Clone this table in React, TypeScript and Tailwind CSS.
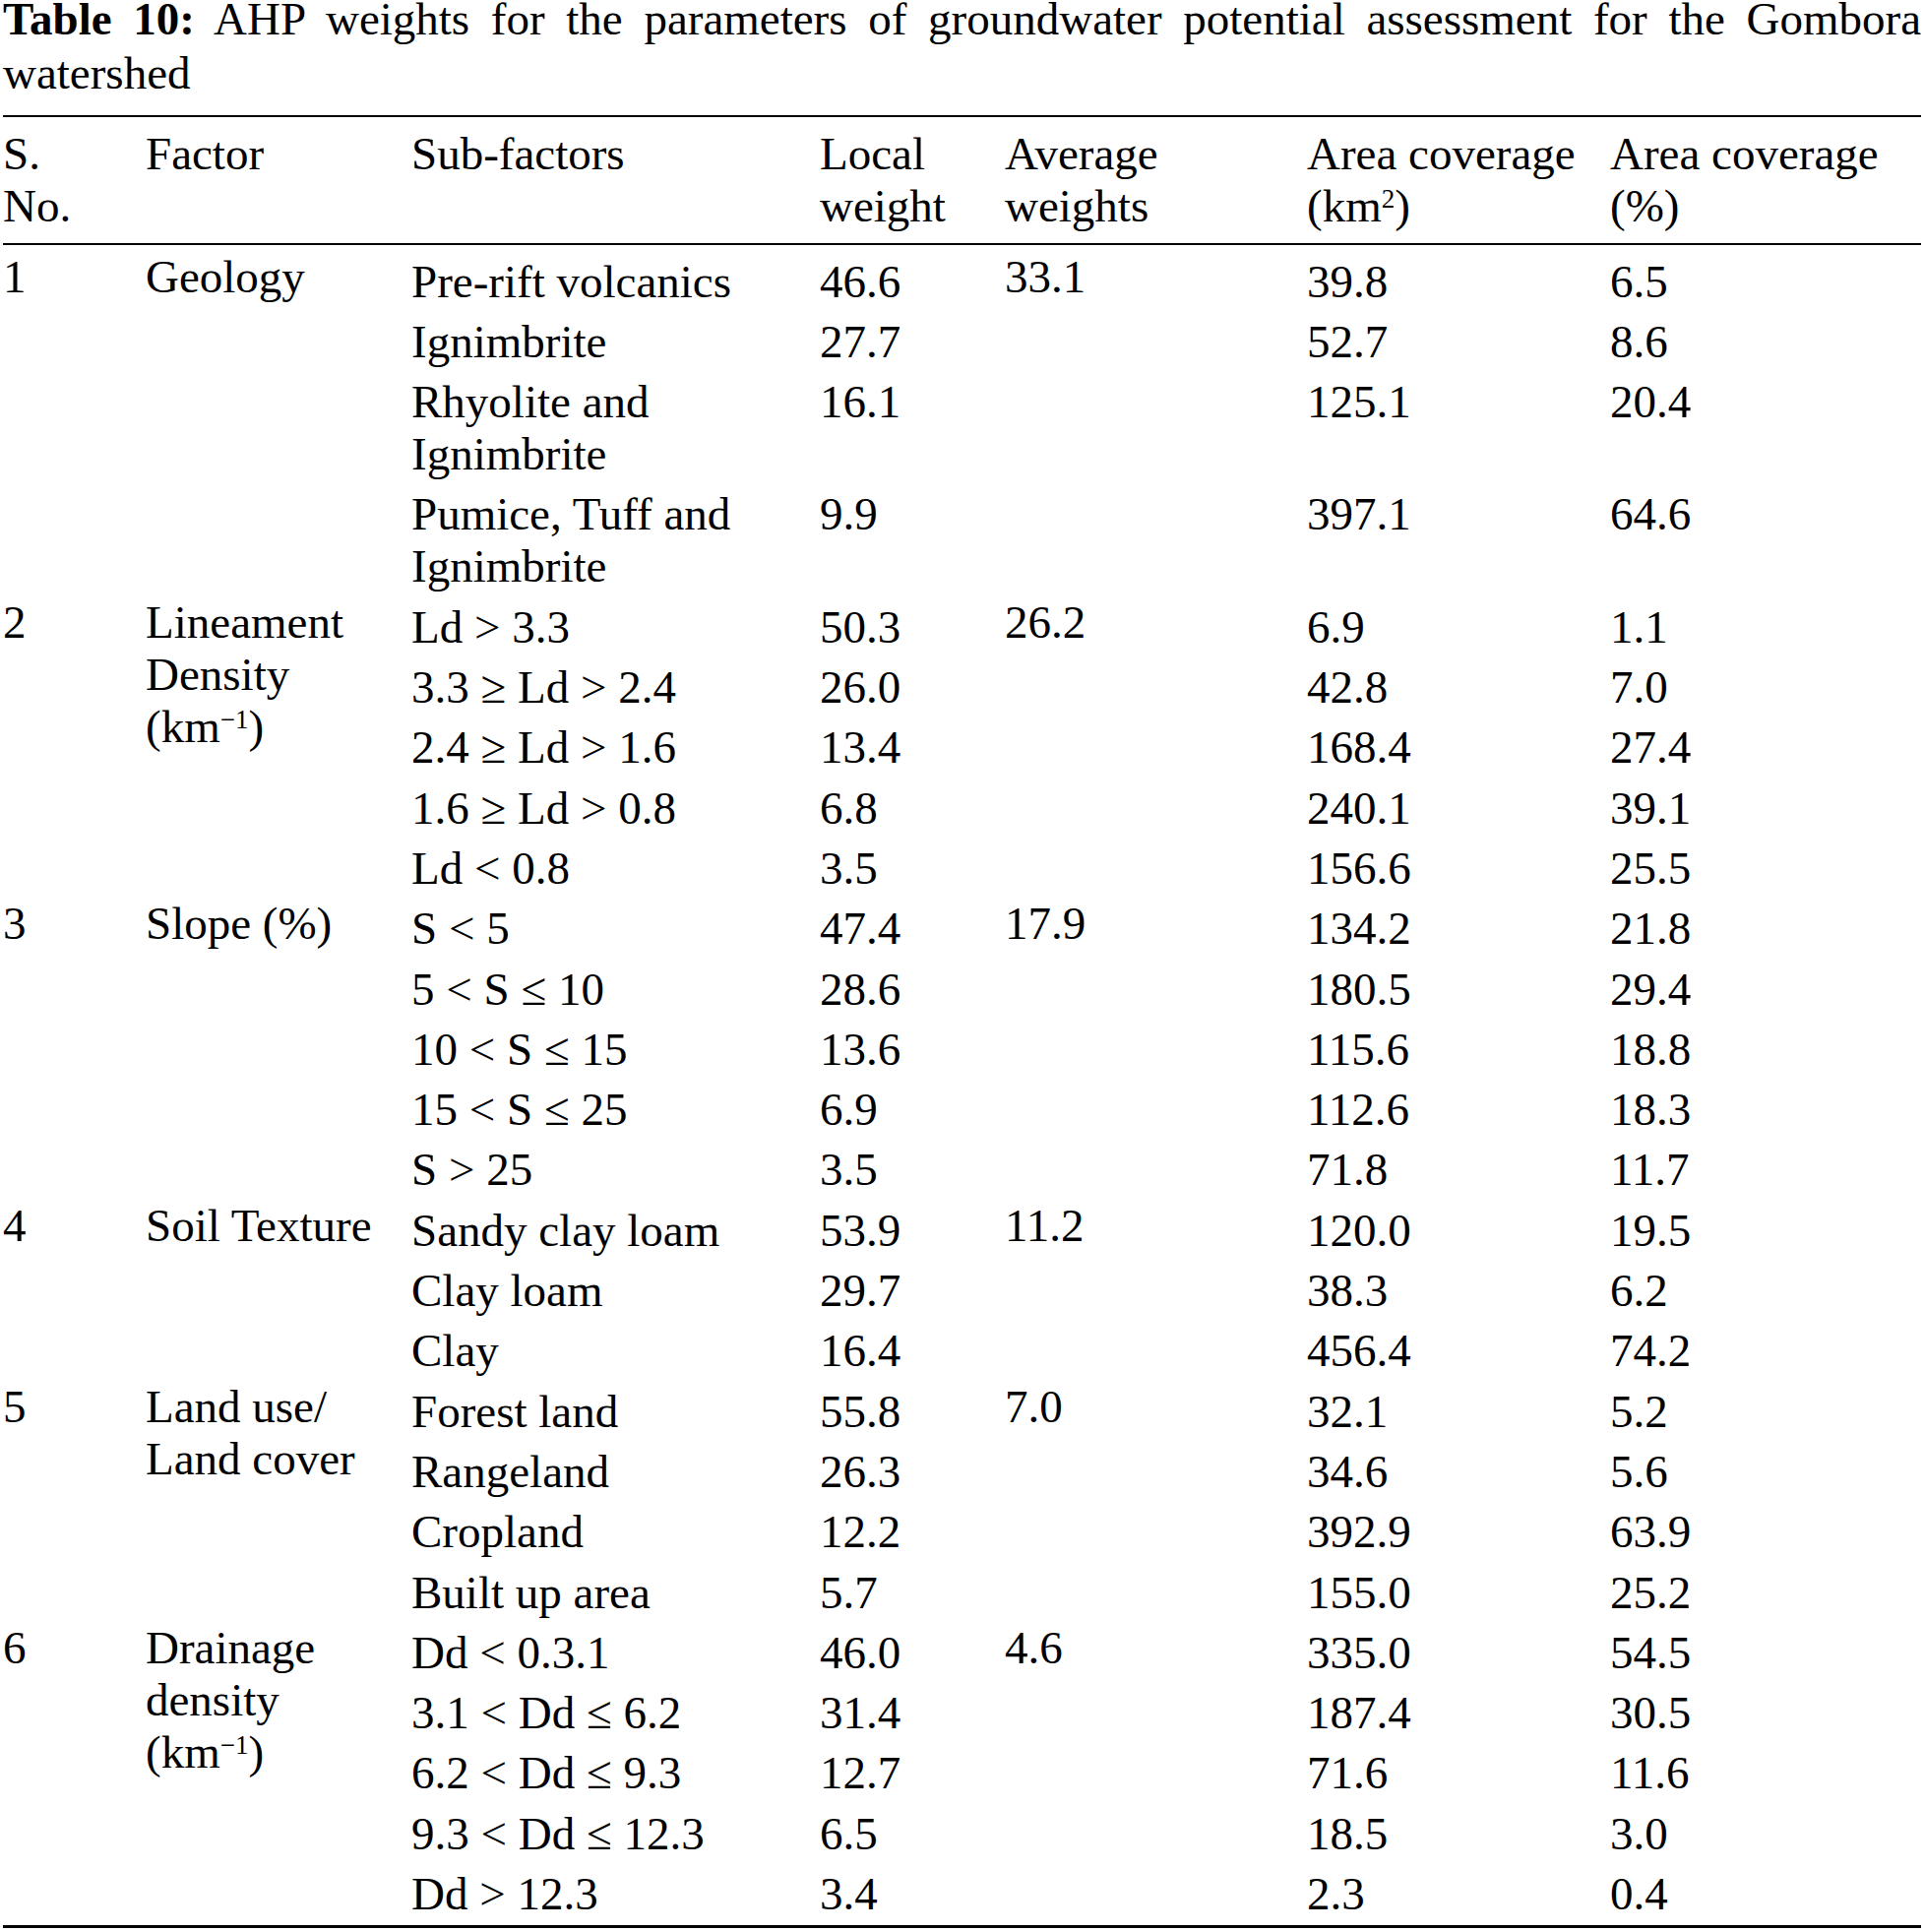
import type { ReactNode } from 'react'

type Row = { sub: ReactNode; local: string; km: string; pct: string }
type Group = { no: string; factor: ReactNode; avg: string; rows: Row[] }

const perKm = (
  <>
    (km<sup className="text-[27px]">−1</sup>)
  </>
)

const groups: Group[] = [
  {
    no: '1',
    factor: 'Geology',
    avg: '33.1',
    rows: [
      { sub: 'Pre-rift volcanics', local: '46.6', km: '39.8', pct: '6.5' },
      { sub: 'Ignimbrite', local: '27.7', km: '52.7', pct: '8.6' },
      {
        sub: (
          <>
            Rhyolite and
            <br />
            Ignimbrite
          </>
        ),
        local: '16.1',
        km: '125.1',
        pct: '20.4',
      },
      {
        sub: (
          <>
            Pumice, Tuff and
            <br />
            Ignimbrite
          </>
        ),
        local: '9.9',
        km: '397.1',
        pct: '64.6',
      },
    ],
  },
  {
    no: '2',
    factor: (
      <>
        Lineament
        <br />
        Density
        <br />
        {perKm}
      </>
    ),
    avg: '26.2',
    rows: [
      { sub: 'Ld > 3.3', local: '50.3', km: '6.9', pct: '1.1' },
      { sub: '3.3 ≥ Ld > 2.4', local: '26.0', km: '42.8', pct: '7.0' },
      { sub: '2.4 ≥ Ld > 1.6', local: '13.4', km: '168.4', pct: '27.4' },
      { sub: '1.6 ≥ Ld > 0.8', local: '6.8', km: '240.1', pct: '39.1' },
      { sub: 'Ld < 0.8', local: '3.5', km: '156.6', pct: '25.5' },
    ],
  },
  {
    no: '3',
    factor: 'Slope (%)',
    avg: '17.9',
    rows: [
      { sub: 'S < 5', local: '47.4', km: '134.2', pct: '21.8' },
      { sub: '5 < S ≤ 10', local: '28.6', km: '180.5', pct: '29.4' },
      { sub: '10 < S ≤ 15', local: '13.6', km: '115.6', pct: '18.8' },
      { sub: '15 < S ≤ 25', local: '6.9', km: '112.6', pct: '18.3' },
      { sub: 'S > 25', local: '3.5', km: '71.8', pct: '11.7' },
    ],
  },
  {
    no: '4',
    factor: 'Soil Texture',
    avg: '11.2',
    rows: [
      { sub: 'Sandy clay loam', local: '53.9', km: '120.0', pct: '19.5' },
      { sub: 'Clay loam', local: '29.7', km: '38.3', pct: '6.2' },
      { sub: 'Clay', local: '16.4', km: '456.4', pct: '74.2' },
    ],
  },
  {
    no: '5',
    factor: (
      <>
        Land use/
        <br />
        Land cover
      </>
    ),
    avg: '7.0',
    rows: [
      { sub: 'Forest land', local: '55.8', km: '32.1', pct: '5.2' },
      { sub: 'Rangeland', local: '26.3', km: '34.6', pct: '5.6' },
      { sub: 'Cropland', local: '12.2', km: '392.9', pct: '63.9' },
      { sub: 'Built up area', local: '5.7', km: '155.0', pct: '25.2' },
    ],
  },
  {
    no: '6',
    factor: (
      <>
        Drainage
        <br />
        density
        <br />
        {perKm}
      </>
    ),
    avg: '4.6',
    rows: [
      { sub: 'Dd < 0.3.1', local: '46.0', km: '335.0', pct: '54.5' },
      { sub: '3.1 < Dd ≤ 6.2', local: '31.4', km: '187.4', pct: '30.5' },
      { sub: '6.2 < Dd ≤ 9.3', local: '12.7', km: '71.6', pct: '11.6' },
      { sub: '9.3 < Dd ≤ 12.3', local: '6.5', km: '18.5', pct: '3.0' },
      { sub: 'Dd > 12.3', local: '3.4', km: '2.3', pct: '0.4' },
    ],
  },
]

const headCell = 'pt-[10.5px] pb-[11.5px] text-left align-top font-normal'

export default function App() {
  return (
    <div className="min-h-screen bg-white px-[3px] font-['Liberation_Serif','Times_New_Roman',serif] text-[47px] leading-[53px] text-black">
      <p className="-mt-[8px] text-justify leading-[55px]">
        <span className="font-bold">Table 10:</span> AHP weights for the parameters of groundwater potential assessment for
        the Gombora watershed
      </p>

      <table className="mt-[15px] w-[1949px] table-fixed border-collapse">
        <colgroup>
          <col className="w-[145px]" />
          <col className="w-[270px]" />
          <col className="w-[415px]" />
          <col className="w-[188px]" />
          <col className="w-[307px]" />
          <col className="w-[308px]" />
          <col className="w-[316px]" />
        </colgroup>
        <thead className="border-y-2 border-black">
          <tr>
            <th className={headCell}>
              S.
              <br />
              No.
            </th>
            <th className={headCell}>Factor</th>
            <th className={headCell}>Sub-factors</th>
            <th className={headCell}>
              Local
              <br />
              weight
            </th>
            <th className={headCell}>
              Average
              <br />
              weights
            </th>
            <th className={headCell}>
              Area coverage
              <br />
              (km<sup className="text-[27px]">2</sup>)
            </th>
            <th className={headCell}>
              Area coverage
              <br />
              (%)
            </th>
          </tr>
        </thead>
        <tbody className="border-b-[3px] border-black">
          {groups.map((g, gi) =>
            g.rows.map((r, ri) => {
              const firstRow = gi === 0 && ri === 0
              const lastRow = gi === groups.length - 1 && ri === g.rows.length - 1
              const sub = `${firstRow ? 'pt-[10.6px]' : 'pt-[8.3px]'} ${lastRow ? 'pb-[5px]' : 'pb-0'} align-top`
              const lead = `${gi === 0 ? 'pt-[5.6px]' : 'pt-[3.3px]'} align-top`
              return (
                <tr key={`${g.no}-${ri}`}>
                  {ri === 0 && (
                    <>
                      <td rowSpan={g.rows.length} className={lead}>
                        {g.no}
                      </td>
                      <td rowSpan={g.rows.length} className={lead}>
                        {g.factor}
                      </td>
                    </>
                  )}
                  <td className={sub}>{r.sub}</td>
                  <td className={sub}>{r.local}</td>
                  {ri === 0 && (
                    <td rowSpan={g.rows.length} className={lead}>
                      {g.avg}
                    </td>
                  )}
                  <td className={sub}>{r.km}</td>
                  <td className={sub}>{r.pct}</td>
                </tr>
              )
            }),
          )}
        </tbody>
      </table>
    </div>
  )
}
